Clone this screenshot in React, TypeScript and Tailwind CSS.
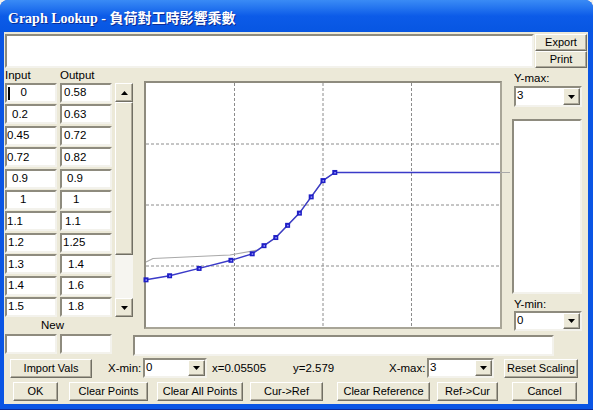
import React from 'react';

// classic 3D borders (XP dialog, classic controls)
const sunken =
  'border-2 border-t-[#8e8b7e] border-l-[#8e8b7e] border-r-[#f3f2ec] border-b-[#f3f2ec] bg-white';
const raised =
  'border border-t-white border-l-white border-r-[#716f64] border-b-[#716f64] shadow-[inset_-1px_-1px_0_#aca899] bg-[#ece9d8]';

const rows = [
  { i: '0', ic: 'pl-[1px]', o: '0.58', oc: 'pl-[2px]', caret: true },
  { i: '0.2', ic: 'pl-[5px]', o: '0.63', oc: 'pl-[2px]' },
  { i: '0.45', ic: 'pl-0', o: '0.72', oc: 'pl-[2px]' },
  { i: '0.72', ic: 'pl-0', o: '0.82', oc: 'pl-[2px]' },
  { i: '0.9', ic: 'pl-[5px]', o: '0.9', oc: 'pl-[5px]' },
  { i: '1', ic: 'pl-[13px]', o: '1', oc: 'pl-[11px]' },
  { i: '1.1', ic: 'pl-0', o: '1.1', oc: 'pl-[3px]' },
  { i: '1.2', ic: 'pl-[1px]', o: '1.25', oc: 'pl-[1px]' },
  { i: '1.3', ic: 'pl-[1px]', o: '1.4', oc: 'pl-[6px]' },
  { i: '1.4', ic: 'pl-[1px]', o: '1.6', oc: 'pl-[6px]' },
  { i: '1.5', ic: 'pl-[1px]', o: '1.8', oc: 'pl-[6px]' },
];

const pts: [number, number][] = [
  [0, 0.58], [0.2, 0.63], [0.45, 0.72], [0.72, 0.82], [0.9, 0.9], [1, 1],
  [1.1, 1.1], [1.2, 1.25], [1.3, 1.4], [1.4, 1.6], [1.5, 1.8], [1.6, 1.9],
];

function Tri({ up }: { up?: boolean }) {
  return (
    <svg width="7" height="4" viewBox="0 0 7 4" className="block">
      <path d={up ? 'M3.5 0L7 4H0Z' : 'M0 0H7L3.5 4Z'} fill="#000" />
    </svg>
  );
}

function Btn({ label, className }: { label: string; className: string }) {
  return (
    <div className={`flex items-center justify-center text-[11px] ${raised} ${className}`}>{label}</div>
  );
}

function Combo({ value, className }: { value: string; className: string }) {
  return (
    <div className={`flex ${sunken} ${className}`}>
      <span className="flex-1 pl-[1px] text-[11.5px] leading-[15px]">{value}</span>
      <div className={`w-[17px] flex items-center justify-center ${raised}`}>
        <Tri />
      </div>
    </div>
  );
}

function Chart() {
  const W = 354;
  const H = 244;
  const sx = (x: number) => (x / 3) * W;
  const sy = (y: number) => H - (y / 3) * H;
  const cur = pts.map(([x, y]) => `${sx(x).toFixed(1)},${sy(y).toFixed(1)}`);
  const blue = [...cur, `${W},${sy(1.9).toFixed(1)}`].join(' ');
  const ref = ['0,179', '7,175.5', '84,172', '112,167', ...cur.slice(5), `364,${sy(1.9).toFixed(1)}`].join(' ');
  return (
    <svg width={W} height={H} viewBox={`0 0 ${W} ${H}`} className="block overflow-visible">
      {[1, 2, 3].map((k) => (
        <line key={'v' + k} x1={(k * W) / 4} y1={0} x2={(k * W) / 4} y2={H} stroke="#8c8c8c" strokeDasharray="3 2" />
      ))}
      {[1, 2, 3].map((k) => (
        <line key={'h' + k} x1={0} y1={(k * H) / 4} x2={W} y2={(k * H) / 4} stroke="#8c8c8c" strokeDasharray="3 2" />
      ))}
      <polyline points={ref} fill="none" stroke="#a9a9a9" strokeWidth="1.2" />
      <polyline points={blue} fill="none" stroke="#3a3ac8" strokeWidth="1.4" />
      {pts.map(([x, y], n) => (
        <g key={n}>
          <rect x={sx(x) - 2.5} y={sy(y) - 2.5} width="5" height="5" fill="#1f1fc6" />
          <rect x={sx(x) - 0.5} y={sy(y) - 0.5} width="1.5" height="1.5" fill="#9a9aff" />
        </g>
      ))}
    </svg>
  );
}

export default function App() {
  return (
    <div className="w-[593px] h-[410px] bg-[#f1f1ee] overflow-hidden font-['Liberation_Sans',Arial,sans-serif] text-black">
      <div className="h-full flex flex-col rounded-t-[8px] bg-[#0a55e4] shadow-[inset_0_-1px_0_#0a2a9a]">
        {/* title bar */}
        <div className="h-[32px] shrink-0 rounded-t-[8px] bg-linear-to-b from-[#3a8bf5] via-[#0c5be8] to-[#0756e2] flex items-center pl-[8px] pt-[5px] text-white text-[14px] font-bold font-['Liberation_Serif','Noto_Sans_CJK_TC',serif] [text-shadow:1px_1px_0_#0b2b94]">
          Graph Lookup - 負荷對工時影響乘數
        </div>

        <div className="flex-1 ml-[4px] mr-[5px] mb-[6px] bg-[#ece9d8] flex flex-col pt-[2px] text-[11.5px]">
          {/* top row */}
          <div className="h-[34px] flex">
            <div className={`ml-[1px] w-[529px] h-full ${sunken}`} />
            <div className="ml-[1px] w-[52px] flex flex-col">
              <Btn label="Export" className="h-[17px]" />
              <Btn label="Print" className="h-[17px]" />
            </div>
          </div>

          {/* middle */}
          <div className="mt-[2px] h-[286px] flex">
            {/* table column */}
            <div className="w-[129px] flex flex-col">
              <div className="h-[13px] flex pl-[1px] leading-[10px]">
                <span className="w-[55px]">Input</span>
                <span>Output</span>
              </div>
              <div className="h-[234px] flex">
                <div className="ml-[1px] w-[107px] flex flex-col justify-between">
                  {rows.map((r, n) => (
                    <div key={n} className="h-[20px] flex">
                      <div className={`w-[52px] flex items-center ${sunken} ${r.ic}`}>
                        {r.caret && <span className="w-[1.5px] h-[13px] bg-black mr-[11px]" />}
                        {r.i}
                      </div>
                      <div className={`ml-[3px] w-[52px] flex items-center ${sunken} ${r.oc}`}>{r.o}</div>
                    </div>
                  ))}
                </div>
                <div className="ml-[3px] w-[18px] flex flex-col">
                  <div className={`h-[19px] flex items-center justify-center ${raised}`}>
                    <Tri up />
                  </div>
                  <div className={`h-[153px] ${raised}`} />
                  <div className="flex-1 bg-[#f6f5f0]" />
                  <div className={`h-[19px] flex items-center justify-center ${raised}`}>
                    <Tri />
                  </div>
                </div>
              </div>
              <div className="h-[17px] pl-[37px] leading-[17px]">New</div>
              <div className="h-[20px] flex pl-[1px]">
                <div className={`w-[52px] ${sunken}`} />
                <div className={`ml-[3px] w-[52px] ${sunken}`} />
              </div>
            </div>

            {/* graph + right panel */}
            <div className="flex flex-col">
              <div className="h-[261px] flex">
                <div className="ml-[11px] mt-[11px] w-[358px] h-[248px] border-2 border-t-[#8e8b7e] border-l-[#8e8b7e] border-r-[#a8a597] border-b-[#a8a597] bg-white">
                  <Chart />
                </div>
                <div className="ml-[10px] w-[70px] flex flex-col">
                  <div className="h-[16px] pl-[2px] pt-[1px] leading-[14px]">Y-max:</div>
                  <Combo value="3" className="ml-[2px] w-[68px] h-[21px]" />
                  <div className={`mt-[12px] h-[175px] ${sunken}`} />
                  <div className="h-[17px] pl-[2px] pt-[3px] leading-[14px]">Y-min:</div>
                  <Combo value="0" className="ml-[2px] w-[68px] h-[20px]" />
                </div>
              </div>
              <div className={`mt-[4px] w-[421px] h-[21px] ${sunken}`} />
            </div>
          </div>

          {/* axis row */}
          <div className="mt-[2px] h-[20px] flex items-center leading-[20px]">
            <Btn label="Import Vals" className="ml-[6px] w-[82px] h-[19px]" />
            <span className="ml-[16px] w-[35px]">X-min:</span>
            <Combo value="0" className="w-[64px] h-[20px]" />
            <span className="ml-[5px] w-[81px]">x=0.05505</span>
            <span className="w-[96px]">y=2.579</span>
            <span className="w-[38px]">X-max:</span>
            <Combo value="3" className="w-[67px] h-[20px]" />
            <Btn label="Reset Scaling" className="ml-[10px] w-[74px] h-[19px]" />
          </div>

          {/* button row */}
          <div className="mt-[4px] h-[19px] flex">
            <Btn label="OK" className="ml-[9px] w-[45px]" />
            <Btn label="Clear Points" className="ml-[11px] w-[79px]" />
            <Btn label="Clear All Points" className="ml-[9px] w-[86px]" />
            <Btn label="Cur->Ref" className="ml-[7px] w-[73px]" />
            <Btn label="Clear Reference" className="ml-[14px] w-[93px]" />
            <Btn label="Ref->Cur" className="ml-[7px] w-[61px]" />
            <Btn label="Cancel" className="ml-[14px] w-[65px]" />
          </div>
        </div>
      </div>
    </div>
  );
}
